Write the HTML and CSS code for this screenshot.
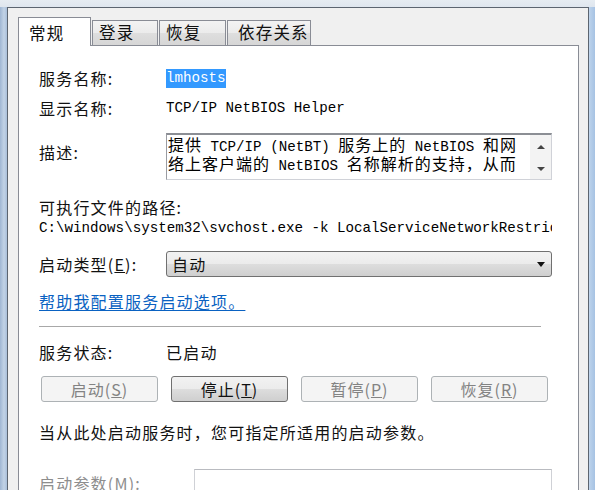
FILE: index.html
```html
<!DOCTYPE html>
<html lang="zh-CN">
<head>
<meta charset="utf-8">
<title>lmhosts 的属性</title>
<link rel="stylesheet" href="styles.css">
</head>
<body>
<div class="screen">
  <div class="window">
    <div class="tabs">
      <div class="tab active">常规</div>
      <div class="tab t-login">登录</div>
      <div class="tab t-recover">恢复</div>
      <div class="tab t-deps">依存关系</div>
    </div>
    <div class="panel">
      <div class="row r-name">
        <span class="label">服务名称:</span>
        <span class="value mono"><span class="selected">lmhosts</span></span>
      </div>
      <div class="row r-display">
        <span class="label">显示名称:</span>
        <span class="value mono">TCP/IP NetBIOS Helper</span>
      </div>
      <div class="row r-desc">
        <span class="label">描述:</span>
        <div class="desc">
          <div class="desc-text mono">
            <div class="line"><span class="cj">提供</span> TCP/IP (NetBT) <span class="cj">服务上的</span> NetBIOS <span class="cj">和网</span></div>
            <div class="line"><span class="cj">络上客户端的</span> NetBIOS <span class="cj">名称解析的支持，从而</span></div>
          </div>
          <div class="scrollbar">
            <span class="arrow up"></span>
            <span class="arrow down"></span>
          </div>
        </div>
      </div>
      <div class="line-label r-path">可执行文件的路径:</div>
      <div class="path mono">C:\windows\system32\svchost.exe -k LocalServiceNetworkRestricted</div>
      <div class="row r-type">
        <span class="label">启动类型(<u>E</u>):</span>
        <div class="combo">
          <span>自动</span>
          <span class="caret"></span>
        </div>
      </div>
      <a class="help" href="#">帮助我配置服务启动选项。</a>
      <div class="separator"></div>
      <div class="row r-status">
        <span class="label">服务状态:</span>
        <span class="value">已启动</span>
      </div>
      <div class="buttons">
        <button class="btn" disabled>启动(<u>S</u>)</button>
        <button class="btn">停止(<u>T</u>)</button>
        <button class="btn" disabled>暂停(<u>P</u>)</button>
        <button class="btn" disabled>恢复(<u>R</u>)</button>
      </div>
      <div class="note">当从此处启动服务时，您可指定所适用的启动参数。</div>
      <div class="params">
        <span class="label muted">启动参数(<u>M</u>):</span>
        <div class="input"></div>
      </div>
    </div>
  </div>
</div>
</body>
</html>
```

FILE: styles.css
```css
* { box-sizing: border-box; }

html, body {
  margin: 0;
  padding: 0;
  background: #b6cde8;
}

body {
  font-family: "Noto Sans CJK SC", "Noto Sans", sans-serif;
  font-size: 16px;
  line-height: 20px;
  letter-spacing: 1.2px;
  color: #111;
}

/* outer aero frame */
.screen {
  width: 595px;
  height: 490px;
  overflow: hidden;
  display: flex;
  padding: 7px 10px 0 7px;
  background:
    linear-gradient(to bottom, #e6ecf2 0, #dfe6ee 7px, transparent 7px),
    linear-gradient(to right, #9fb6d3 0, #c2d3e6 4px, #a9bfda 7px, #f3f6fa 7px, #f3f6fa 585px, #d9e6f4 587px, #b9d0ea 590px, #a6c2e3 595px);
}

.window {
  flex: 1;
  display: flex;
  flex-direction: column;
  background: #f0f0f0;
  border: 1px solid #5c6570;
  border-bottom: none;
  padding: 9px 9px 0 10px;
}

/* tab strip */
.tabs {
  display: flex;
  align-items: flex-end;
  height: 28px;
}

.tab {
  height: 25px;
  border: 1px solid #898c95;
  border-bottom: none;
  background: linear-gradient(to bottom, #f3f3f3 0%, #ebebeb 50%, #dedede 51%, #d6d6d6 100%);
  font-size: 16.5px;
  line-height: 23px;
  padding-left: 6px;
  margin-left: 1px;
  white-space: nowrap;
}

.tab.active {
  position: relative;
  z-index: 1;
  height: 29px;
  margin-left: 0;
  margin-bottom: -1px;
  background: #fff;
  width: 73px;
  padding-left: 10px;
  line-height: 30px;
}

.t-login { width: 66px; }
.t-recover { width: 67px; margin-left: 1px; }
.t-deps { width: 84px; padding-left: 10px; margin-left: 1px; }

/* white page */
.panel {
  flex: 1;
  background: #fff;
  border: 1px solid #898c95;
  border-bottom: none;
  padding: 22px 26px 0 20px;
  display: flex;
  flex-direction: column;
}

.row {
  display: grid;
  grid-template-columns: 127px 1fr;
  align-items: center;
  min-height: 20px;
}

.label { white-space: nowrap; }
.muted { color: #8d8d8d; }

.mono {
  font-family: "Liberation Mono", "DejaVu Sans Mono", monospace;
  font-size: 14.2px;
  letter-spacing: 0;
  color: #000;
}

.mono .cj {
  font-family: "Noto Sans CJK SC", sans-serif;
  font-size: 16px;
  letter-spacing: 1px;
}

.selected {
  background: #3399ff;
  color: #fff;
  padding: 1px 0 2px;
}

.r-display { margin-top: 10px; }

.r-desc {
  margin-top: 15px;
  align-items: start;
}
.r-desc .label { margin-top: 9px; }

.desc {
  height: 47px;
  display: flex;
  border: 1px solid #d0d2d8;
  border-top: 2px solid #8b8e94;
  border-left-color: #9a9ca2;
}

.desc-text {
  flex: 1;
  padding: 0 0 0 1px;
}

.desc-text .line {
  height: 19px;
  line-height: 19px;
  white-space: nowrap;
}

.scrollbar {
  width: 21px;
  background: #f3f3f3;
  display: flex;
  flex-direction: column;
  justify-content: space-between;
  align-items: center;
  padding: 10px 0 8px;
}

.arrow {
  width: 0;
  height: 0;
  border-left: 4px solid transparent;
  border-right: 4px solid transparent;
}
.arrow.up { border-bottom: 4px solid #444; }
.arrow.down { border-top: 4px solid #444; }

.line-label {
  margin-top: 17px;
  height: 20px;
}

.path {
  margin-top: 1px;
  width: 513px;
  height: 20px;
  white-space: nowrap;
  overflow: hidden;
}

.r-type { margin-top: 13px; }

.combo {
  height: 26px;
  border: 1px solid #707070;
  border-radius: 3px;
  background: linear-gradient(to bottom, #f2f2f2 0%, #ebebeb 50%, #dddddd 51%, #cfcfcf 100%);
  display: flex;
  align-items: center;
  justify-content: space-between;
  padding: 0 6px 0 5px;
}

.caret {
  width: 0;
  height: 0;
  border-left: 4px solid transparent;
  border-right: 4px solid transparent;
  border-top: 5px solid #111;
}

.help {
  margin-top: 14px;
  align-self: flex-start;
  height: 20px;
  color: #0a62c2;
  text-decoration: underline;
  text-underline-offset: 2px;
}

.separator {
  margin-top: 15px;
  width: 502px;
  height: 2px;
  border-top: 1px solid #a8a8a8;
  border-bottom: 1px solid #fff;
}

.r-status { margin-top: 14px; }

.buttons {
  margin-top: 14px;
  display: flex;
  gap: 13px;
  padding-left: 2px;
}

.btn {
  width: 117px;
  height: 26px;
  border: 1px solid #707070;
  border-radius: 3px;
  background: linear-gradient(to bottom, #f2f2f2 0%, #ebebeb 50%, #dddddd 51%, #cfcfcf 100%);
  font-family: inherit;
  font-size: 16px;
  line-height: 20px;
  letter-spacing: 1px;
  color: #111;
  padding: 0;
}

.btn:disabled {
  border-color: #adb2b5;
  background: #f4f4f4;
  color: #838383;
}

.note {
  margin-top: 20px;
  height: 20px;
  white-space: nowrap;
}

.params {
  margin-top: 27px;
  display: grid;
  grid-template-columns: 155px 1fr;
  align-items: start;
}

.params .label { margin-top: 4px; }

.input {
  height: 40px;
  border: 1px solid #cfd1d6;
  border-top-color: #b9bbc0;
  background: #fff;
}
```
